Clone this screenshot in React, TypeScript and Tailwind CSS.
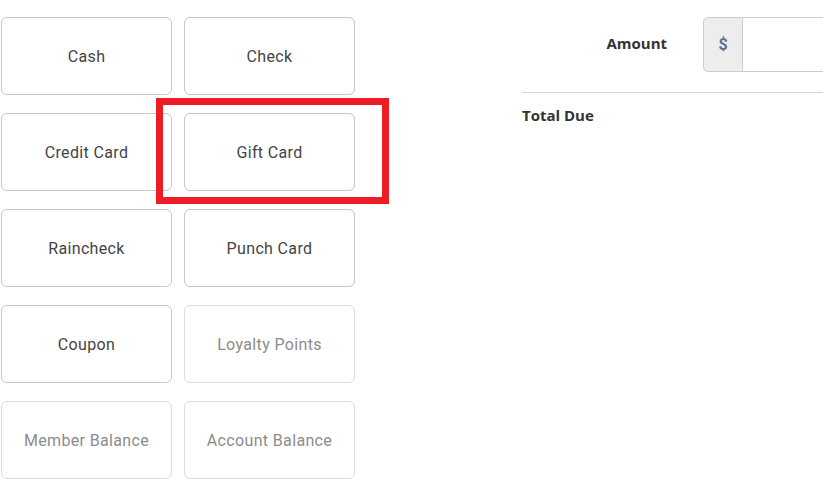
import React from 'react';

interface Tender {
  label: string;
  disabled?: boolean;
}

const tenders: Tender[] = [
  { label: 'Cash' },
  { label: 'Check' },
  { label: 'Credit Card' },
  { label: 'Gift Card' },
  { label: 'Raincheck' },
  { label: 'Punch Card' },
  { label: 'Coupon' },
  { label: 'Loyalty Points', disabled: true },
  { label: 'Member Balance', disabled: true },
  { label: 'Account Balance', disabled: true },
];

const App = () => {
  return (
    <div className="relative w-[823px] h-[479px] overflow-hidden bg-white font-['Roboto',sans-serif]">
      <div className="flex">
        {/* tender buttons */}
        <div className="grid grid-cols-[171px_171px] auto-rows-[78px] gap-x-[12px] gap-y-[18px] pl-[1px] pt-[17px] shrink-0">
          {tenders.map((t) => (
            <button
              key={t.label}
              className={`rounded-[6px] border bg-white pt-[2px] text-[16px] tracking-[0.35px] ${
                t.disabled ? 'border-[#dcdcdc] text-[#8c8c8c]' : 'border-[#c6c6c6] text-[#444444]'
              }`}
            >
              {t.label}
            </button>
          ))}
        </div>

        {/* amount panel */}
        <div className="ml-[167px] flex-1 pt-[17px]">
          <div className="flex items-center h-[55px]">
            <div className="w-[181px] pr-[36px] pb-[2px] text-right text-[15px] font-bold text-[#333333] font-['Open_Sans',sans-serif]">
              Amount
            </div>
            <div className="flex flex-1 h-[55px] -mr-[10px]">
              <div className="w-[40px] flex items-center justify-center rounded-l-[5px] border border-[#cccccc] bg-[#ededed] text-[16px] font-bold text-[#5b7391]">
                $
              </div>
              <div className="flex-1 border border-l-0 border-[#cccccc] bg-white" />
            </div>
          </div>
          <div className="mt-[20px] border-t border-[#d4d4d4]" />
          <div className="pt-[11px] text-[15px] font-bold text-[#333333] font-['Open_Sans',sans-serif]">
            Total Due
          </div>
        </div>
      </div>

      {/* annotation highlight */}
      <div className="absolute left-[156px] top-[98px] w-[233px] h-[106px] border-[7px] border-[#ee1c25] pointer-events-none" />
    </div>
  );
};

export default App;
